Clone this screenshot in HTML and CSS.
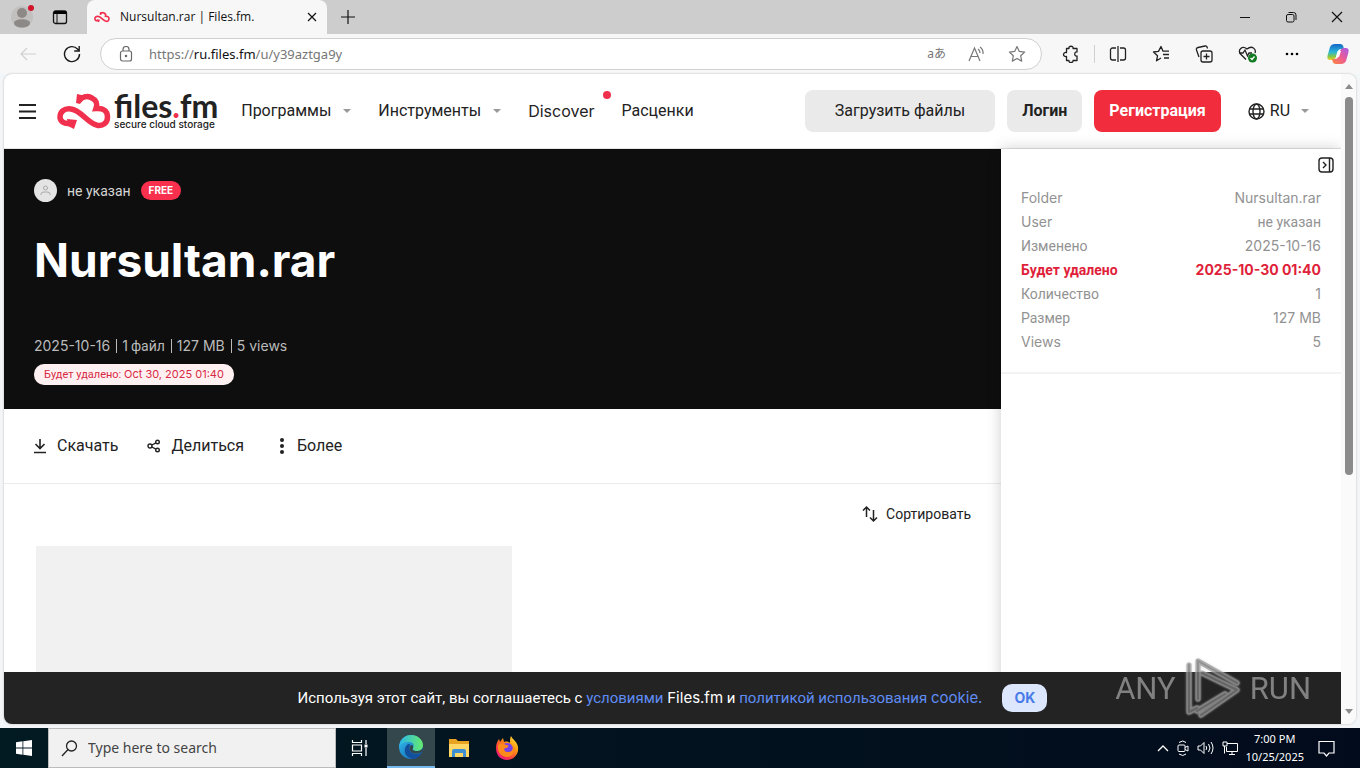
FILE: index.html
```html
<!DOCTYPE html>
<html lang="ru">
<head>
<meta charset="utf-8">
<title>Nursultan.rar | Files.fm.</title>
<link rel="stylesheet" href="styles.css">
</head>
<body>
<svg class="defs" aria-hidden="true">
  <defs>
    <symbol id="cloud" viewBox="0 0 54 36">
      <path d="M22 7.500C25 4 30 2.500 34 4.500C39 7 41 10 39 15.500C47 15 50.500 18 50.500 24C50.500 30 46 33 41 32.500C31 31 24 17 14 16C7 15 3 19 3 24C3 28 7 31 12 30.500" fill="none" stroke="#f0304c" stroke-width="5.500"/>
      <path d="M20 1l9 2-6 8-4-1zM10 26l10 1-3 9-6-3z" fill="#f0304c"/>
    </symbol>
    <linearGradient id="edgeBlue" x1="0" y1="0" x2="1" y2="1"><stop offset="0" stop-color="#35c1f1"/><stop offset="1" stop-color="#0c59a4"/></linearGradient>
    <linearGradient id="edgeGreen" x1="0" y1="0" x2="1" y2="0"><stop offset="0" stop-color="#2bb5e8"/><stop offset="1" stop-color="#66eb6e"/></linearGradient>
    <linearGradient id="fire" x1="1" y1="0" x2="0.2" y2="1"><stop offset="0" stop-color="#fff44f"/><stop offset="0.4" stop-color="#ff980e"/><stop offset="0.75" stop-color="#ff3647"/><stop offset="1" stop-color="#e31587"/></linearGradient>
    <linearGradient id="copA" x1="0" y1="0" x2="0" y2="1"><stop offset="0" stop-color="#1565c8"/><stop offset="0.5" stop-color="#29b6d8"/><stop offset="0.8" stop-color="#8bc83f"/><stop offset="1" stop-color="#f4cf2e"/></linearGradient>
    <linearGradient id="copB" x1="1" y1="0" x2="0" y2="1"><stop offset="0" stop-color="#a45bea"/><stop offset="0.5" stop-color="#ee5b93"/><stop offset="1" stop-color="#fa8a3c"/></linearGradient>
  </defs>
</svg>

<header class="titlebar">
  <button class="profile" aria-label="Profile"><svg width="24" height="24" viewBox="0 0 24 24"><circle cx="12" cy="12" r="11" fill="#c2c0bf"/><g fill="#8d8987"><circle cx="12" cy="8" r="5"/><path d="M4 18c0-5 16-5 16 0 0 6-16 6-16 0z"/></g><circle cx="21" cy="3" r="3" fill="#d3122c"/></svg></button>
  <button class="tabs-menu" aria-label="Tab actions"><svg width="16" height="16" viewBox="0 0 16 16"><rect x="1.500" y="2" width="13" height="12.500" rx="2" fill="none" stroke="#111" stroke-width="1.300"/><path d="M2 2h12v3H2z"/><path d="M5 4v10" stroke="#111"/></svg></button>
  <div class="tab">
    <svg width="16" height="12"><use href="#cloud"/></svg>
    <span class="tab-title">Nursultan.rar | Files.fm.</span>
    <button aria-label="Close tab"><svg width="10" height="10" viewBox="0 0 10 10" stroke="#111" stroke-width="1.200"><path d="M1 1l8 8M9 1l-8 8"/></svg></button>
  </div>
  <button class="new-tab" aria-label="New tab"><svg width="14" height="14" viewBox="0 0 14 14" stroke="#111" stroke-width="1.200"><path d="M7 0v14M0 7h14"/></svg></button>
  <div class="window-buttons">
    <button aria-label="Minimize"><svg width="12" height="12" viewBox="0 0 12 12"><path d="M1 6.500h10" stroke="#111"/></svg></button>
    <button aria-label="Restore"><svg width="12" height="12" viewBox="0 0 12 12" fill="none" stroke="#111"><rect x="1.500" y="3.500" width="7.500" height="7.500" rx="1.500"/><path d="M3.500 1.500h5a2.500 2.500 0 0 1 2.500 2.500v5"/></svg></button>
    <button aria-label="Close"><svg width="12" height="12" viewBox="0 0 12 12" stroke="#111" stroke-width="1.200"><path d="M1 1l10 10M11 1L1 11"/></svg></button>
  </div>
</header>

<div class="toolbar">
  <button class="back" aria-label="Back"><svg width="18" height="14" viewBox="0 0 18 14" fill="none" stroke="#cfcfcf" stroke-width="1.200"><path d="M17 7H2M8 1L2 7l6 6"/></svg></button>
  <button class="reload" aria-label="Refresh"><svg width="18" height="18" viewBox="0 0 18 18" fill="none" stroke="#1b1b1b" stroke-width="1.400"><path d="M16.500 9A7.500 7.500 0 1 1 14.500 4L16 5.500M16.200 1v5h-5"/></svg></button>
  <div class="address">
    <svg width="14" height="16" viewBox="0 0 14 16" fill="none" stroke="#6a6a6a" stroke-width="1.200"><rect x="1.500" y="5" width="11" height="10" rx="2"/><path d="M4 5V3.500a3 3 0 0 1 6 0V5"/><circle cx="7" cy="10" r=".7" fill="#555"/></svg>
    <span class="url">https://<b>ru.files.fm</b>/u/y39aztga9y</span>
    <button class="translate" aria-label="Translate">aあ</button>
    <button aria-label="Read aloud"><svg width="18" height="16" viewBox="0 0 18 16" fill="none" stroke="#777" stroke-width="1.200"><path d="M1 15L6.500 2 12 15M3 10.500h7M10 3q2 1.500 2 4M12 1q3.500 2.500 3 7"/></svg></button>
    <button aria-label="Add to favorites"><svg width="18" height="18" viewBox="0 0 18 18" fill="none" stroke="#777" stroke-width="1.200" stroke-linejoin="round"><path d="M9 1.500l2.300 4.900 5.300.7-3.900 3.700 1 5.300L9 13.500l-4.700 2.600 1-5.300L1.400 7.100l5.300-.7z"/></svg></button>
  </div>
  <div class="extensions">
    <button aria-label="Extensions"><svg width="18" height="18" viewBox="0 0 18 18" fill="none" stroke="#222" stroke-width="1.300" stroke-linejoin="round"><path d="M4.500 3.500h2.500c-.8-3 4.800-3 4 0h4V7c-3-.8-3 4.800 0 4v4.500h-4c.8 2.500-4.800 2.500-4 0H4.500v-4c-4 .8-4-4.800 0-4z"/></svg></button>
    <i class="divider"></i>
    <button aria-label="Split screen"><svg width="18" height="18" viewBox="0 0 18 18" fill="none" stroke="#222" stroke-width="1.300"><path d="M7 3H3.500A2 2 0 0 0 1.500 5v8a2 2 0 0 0 2 2H7M11 3h3.500a2 2 0 0 1 2 2v8a2 2 0 0 1-2 2H11M9 1v16"/></svg></button>
    <button aria-label="Favorites"><svg width="18" height="18" viewBox="0 0 18 18" fill="none" stroke="#222" stroke-width="1.300" stroke-linejoin="round"><path d="M9 13l-4.500 2.800 1-5L1.500 7l5-.6L9 1.500l2 4.700h6M11 9.500h6M12 13h5"/></svg></button>
    <button aria-label="Collections"><svg width="18" height="18" viewBox="0 0 18 18" fill="none" stroke="#222" stroke-width="1.300"><rect x="6" y="6" width="11" height="11" rx="2"/><path d="M11.500 8.500v6M8.500 11.500h6M4 12L1.500 5Q1 3 3 2.500L10 1q2-.3 2.500 2.500"/></svg></button>
    <button aria-label="Browser essentials"><svg width="20" height="18" viewBox="0 0 20 18" fill="none" stroke="#222" stroke-width="1.300"><path d="M8 14.500L2.500 9C-.5 5 4 0 9 4c5-4 9.500 0 8 4M1 8h4l2-3 2.500 6L11 8h3"/><circle cx="14.500" cy="13" r="4.500" fill="#117a22" stroke="none"/><path d="M12.500 13l1.500 1.500 2.500-3" stroke="#fff"/></svg></button>
    <button aria-label="Settings"><svg width="18" height="18" viewBox="0 0 18 18"><circle cx="4" cy="9" r="1.300"/><circle cx="9" cy="9" r="1.300"/><circle cx="14" cy="9" r="1.300"/></svg></button>
    <button aria-label="Copilot"><svg width="24" height="24" viewBox="0 0 24 24"><path d="M9 2h5c2 0 3 1 3.500 3l.5 2h-3c-2 0-3 1-4 4l-1 4c-.8 2-2 3-4 3H4c-3 0-3-3-2-6l2-7C5 3 6.500 2 9 2z" fill="url(#copA)"/><path d="M15 22h-5c-2 0-3-1-3.500-3L6 17h3c2 0 3-1 4-4l1-4c.8-2 2-3 4-3h2c3 0 3 3 2 6l-2 7c-1 2-2.500 3-5 3z" fill="url(#copB)"/><path d="M12 9h3l-2 6h-3z" fill="#fff"/></svg></button>
  </div>
</div>

<div class="viewport">
  <div class="page">
    <header class="site-header">
      <button class="burger" aria-label="Меню"><svg width="17" height="16" viewBox="0 0 17 16" stroke="#222" stroke-width="2"><path d="M0 2h17M0 8.500h17M0 15h17"/></svg></button>
      <a class="logo" href="#">
        <svg width="54" height="36"><use href="#cloud"/></svg>
        <span class="logo-words"><span class="logo-name">files<em>.</em>fm</span><span class="logo-sub">secure cloud storage</span></span>
      </a>
      <nav class="site-nav">
        <a class="has-menu" href="#">Программы</a>
        <a class="has-menu" href="#">Инструменты</a>
        <a class="latin has-badge" href="#">Discover</a>
        <a href="#">Расценки</a>
      </nav>
      <div class="account">
        <button class="btn upload">Загрузить файлы</button>
        <button class="btn login">Логин</button>
        <button class="btn register">Регистрация</button>
        <button class="language has-menu"><svg width="17" height="17" viewBox="0 0 17 17" fill="none" stroke="#222" stroke-width="1.400"><circle cx="8.500" cy="8.500" r="7.500"/><ellipse cx="8.500" cy="8.500" rx="3.500" ry="7.500"/><path d="M1.500 6h14M1.500 11h14"/></svg><span>RU</span></button>
      </div>
    </header>
    <div class="columns">
      <main class="content">
        <section class="hero">
          <div class="owner">
            <span class="avatar"><svg width="11" height="11" viewBox="0 0 11 11" fill="none" stroke="#aaa"><circle cx="5.500" cy="3" r="2"/><path d="M1 10V9q0-2 3-2h3q3 0 3 2v1"/></svg></span>
            <span>не указан</span><span class="free">FREE</span>
          </div>
          <h1>Nursultan.rar</h1>
          <ul class="meta"><li class="latin">2025-10-16</li><li><span class="latin">1</span> файл</li><li class="latin">127 MB</li><li class="latin">5 views</li></ul>
          <span class="expires">Будет удалено: <span class="latin">Oct 30, 2025 01:40</span></span>
        </section>
        <div class="actions">
          <button><svg width="14" height="16" viewBox="0 0 14 16" fill="none" stroke="#222" stroke-width="1.600"><path d="M7 1v9M2.500 6L7 10.500 11.500 6M1 14.500h12"/></svg>Скачать</button>
          <button><svg width="14" height="14" viewBox="0 0 14 14" fill="none" stroke="#222" stroke-width="1.400"><circle cx="3" cy="7" r="2"/><circle cx="10.500" cy="3" r="1.800"/><circle cx="10.500" cy="11" r="1.800"/><path d="M4.800 6L9 3.800M4.800 8L9 10.200"/></svg>Делиться</button>
          <button class="more"><svg width="4" height="16" viewBox="0 0 4 16" fill="#222"><circle cx="2" cy="2" r="2"/><circle cx="2" cy="8" r="2"/><circle cx="2" cy="14" r="2"/></svg>Более</button>
        </div>
        <div class="sorting"><button><svg width="16" height="18" viewBox="0 0 16 18" fill="none" stroke="#222" stroke-width="1.500"><path d="M4.500 12V2M1 5.500L4.500 2 8 5.500M11.500 5v11M8 12.500l3.500 3.500 3.500-3.500"/></svg>Сортировать</button></div>
        <div class="files"><div class="file-card"></div></div>
      </main>
      <aside class="details">
        <button class="collapse" aria-label="Скрыть панель"><svg width="16" height="16" viewBox="0 0 16 16" fill="none" stroke="#222" stroke-width="1.400"><rect x="1" y="1" width="14" height="14" rx="3"/><path d="M11.500 1v14M5 5l3 3-3 3"/></svg></button>
        <dl>
          <div><dt class="latin">Folder</dt><dd class="latin">Nursultan.rar</dd></div>
          <div><dt class="latin">User</dt><dd>не указан</dd></div>
          <div><dt>Изменено</dt><dd class="latin">2025-10-16</dd></div>
          <div class="warn"><dt>Будет удалено</dt><dd class="latin">2025-10-30 01:40</dd></div>
          <div><dt>Количество</dt><dd class="latin">1</dd></div>
          <div><dt>Размер</dt><dd class="latin">127 MB</dd></div>
          <div><dt class="latin">Views</dt><dd class="latin">5</dd></div>
        </dl>
      </aside>
    </div>
    <div class="cookies">
      <p>Используя этот сайт, вы соглашаетесь с <a href="#">условиями</a> <span class="latin">Files.fm</span> и <a href="#">политикой использования <span class="latin">cookie.</span></a></p>
      <button>OK</button>
    </div>
  </div>
  <div class="scrollbar"><i class="arrow up"></i><i class="thumb"></i><i class="arrow down"></i></div>
  <div class="watermark"><span>ANY</span>
    <svg width="60" height="66" viewBox="0 0 60 66" fill="none" stroke-linejoin="round" stroke-linecap="round">
      <g stroke="#999" stroke-width="5"><path d="M14 55L42 38M6 9v47l8-4M15 43V5l39 22M19 17l35 17L18 59"/></g>
      <g stroke="#777" stroke-width="2"><path d="M14 55L42 38M6 9v47l8-4M15 43V5l39 22M19 17l35 17L18 59"/></g>
    </svg>
    <span>RUN</span></div>
</div>

<footer class="taskbar">
  <button class="start" aria-label="Start"><svg width="16" height="16" viewBox="0 0 16 16" fill="#fff"><path d="M0 2.200L6.500 1.300V7.600H0zM7.300 1.200L16 0v7.600H7.300zM0 8.400h6.500v6.300L0 13.800zM7.300 8.400H16V16l-8.700-1.200z"/></svg></button>
  <label class="search"><svg width="17" height="17" viewBox="0 0 17 17" fill="none" stroke="#222" stroke-width="1.300"><circle cx="10.500" cy="6" r="5"/><path d="M7 9.500L1 16"/></svg><input type="text" placeholder="Type here to search" aria-label="Search"></label>
  <button class="app" aria-label="Task view"><svg width="18" height="18" viewBox="0 0 18 18" fill="none" stroke="#fff" stroke-width="1.200"><path d="M1.500 1v2.500h9V1M1.500 17v-2.500h9V17M1.500 6h9v6h-9zM15 1v4M15 9v8"/><path d="M13.500 5.500h3v3h-3z" fill="#fff" stroke="none"/></svg></button>
  <button class="app current" aria-label="Microsoft Edge"><svg width="26" height="26" viewBox="0 0 26 26"><circle cx="13" cy="13" r="12" fill="url(#edgeBlue)"/><path d="M1.500 11C3 4 8 1 13 1c7 0 12 5 12 10 0 4-3 6-6 6-3 0-5-1-4-3 2-4-1-6-4-6-5 0-9 2-9.500 5z" fill="url(#edgeGreen)"/><path d="M10 10c-3 2-5 8-1 12 2 2 5 3 7 3 4-1 6-3 7.500-6-6 3-13 0-12-6 .2-1.500 1-2 1-2s-1-1.500-2.500-1z" fill="#124f9c"/><path d="M13 11c-2 2-2 5 0 7 3 2 7 2 10.500 0 .5 0 .5 1 0 2l1.500-6c-2 3-5 3-7 3-3 0-4-1-3-3 .6-1.500.2-3-2-3z" fill="#34474d"/></svg></button>
  <button class="app" aria-label="File Explorer"><svg width="22" height="20" viewBox="0 0 22 20"><path d="M1 1h7l2 2h11v16H1z" fill="#e9a323"/><path d="M1 6h20v13H1z" fill="#ffd766"/><path d="M4 19v-6q0-2 2-2h10q2 0 2 2v6h-3v-4H7v4z" fill="#3d8fd1"/></svg></button>
  <button class="app" aria-label="Firefox"><svg width="24" height="26" viewBox="0 0 24 26"><path d="M16 1c1 3 6 5 7 11 1 7-4 13-11 13S1 20 1 13c0-4 1-6 3-9l1 3 3-4 1 4c3-1 5 0 6 1 0-3 0-5 1-7z" fill="url(#fire)"/><circle cx="12" cy="14" r="6" fill="#7542e5"/><path d="M3 10c3-3 6-1 8 0 3 0 3 2 0 3-3 0-2 4 2 4 3 0 5-2 5-5 3 5-1 10-6 10-6 0-10-5-9-12z" fill="#ff8a1c"/></svg></button>
  <div class="tray">
    <svg width="12" height="8" viewBox="0 0 12 8" fill="none" stroke="#fff" stroke-width="1.300"><path d="M1 7l5-5 5 5"/></svg>
    <svg width="12" height="16" viewBox="0 0 12 16" fill="none" stroke="#fff"><rect x="1" y="5" width="7" height="6.500" rx="1"/><path d="M8 7.500L11 6v5L8 9.500M2 2.500q4-3 7 0M2 14q4 3 7 0"/></svg>
    <svg width="17" height="14" viewBox="0 0 17 14" fill="none" stroke="#fff"><path d="M1 5h2.500L7 1.500v11L3.500 9H1zM9 5q1.500 2 0 4M11.500 3q3 4 0 8M14 1q4 6 0 12"/></svg>
    <svg width="16" height="14" viewBox="0 0 16 14" fill="none" stroke="#fff"><path d="M5 2.500h10.500v8H4.500V6M1 1h4v4H1zM2.500 5v7.500M7 13.500h6M10 10.500v3"/></svg>
    <time>7:00 PM<br>10/25/2025</time>
    <svg class="notice" width="17" height="17" viewBox="0 0 17 17" fill="none" stroke="#fff" stroke-width="1.200"><path d="M1 1.500h15v11.500h-5L8.500 16 6 13H1z"/></svg>
  </div>
</footer>
</body>
</html>
```
FILE: styles.css
```css
* { box-sizing: border-box; }
body {
  margin: 0;
  height: 100vh;
  display: flex;
  flex-direction: column;
  overflow: hidden;
  background: #f3f6f8;
  color: #222;
  font: 16px/24px Roboto, sans-serif;
}
button {
  display: flex;
  align-items: center;
  justify-content: center;
  padding: 0;
  border: 0;
  background: none;
  color: inherit;
  font: inherit;
  cursor: pointer;
}
a { color: inherit; text-decoration: none; }
svg { display: block; flex: none; }
.defs { position: absolute; width: 0; height: 0; }
.latin { font-family: Inter, sans-serif; }

/* Browser frame */
.titlebar { display: flex; align-items: center; height: 34px; flex: none; background: #cdcdcd; }
.profile { margin-left: 10px; width: 24px; }
.tabs-menu { margin: 0 19px 0 18px; }
.tab {
  display: flex;
  align-items: center;
  align-self: stretch;
  flex: 0 1 240px;
  padding: 0 10px 0 7px;
  gap: 10px;
  border-radius: 8px 8px 0 0;
  background: #f7f7f7;
  font: 12px/16px "Open Sans", sans-serif;
  color: #111;
}
.tab-title { flex: 1; white-space: nowrap; }
.new-tab { margin-left: 14px; }
.window-buttons { display: flex; margin-left: auto; }
.window-buttons button { width: 46px; height: 34px; }

.toolbar { display: flex; align-items: center; height: 40px; flex: none; background: #f7f7f7; }
.back { margin: 0 26px 0 19px; }
.address {
  display: flex;
  align-items: center;
  flex: 1;
  height: 32px;
  margin-left: 19px;
  padding: 0 15px 0 18px;
  gap: 22px;
  border: 1px solid #d0d0d0;
  border-radius: 16px;
  background: #fff;
}
.url { flex: 1; margin-left: -6px; color: #767676; font: 13px/20px "Noto Sans", sans-serif; }
.url b { color: #111; font-weight: 400; }
.translate { color: #777; font: 12px/20px "Noto Sans", "Noto Sans CJK JP", sans-serif; }
.extensions { display: flex; align-items: center; gap: 25px; margin: 0 10px 0 20px; }
.divider { width: 1px; height: 18px; margin: 0 -11px; background: #d0d0d0; }

/* Page area */
.viewport {
  position: relative;
  display: flex;
  flex: 1;
  min-height: 0;
  margin: 0 4px 4px;
  border-radius: 8px;
  overflow: hidden;
  background: #fff;
  box-shadow: 0 0 2px #aaa;
}
.page { position: relative; display: flex; flex-direction: column; flex: 1; min-width: 0; overflow: hidden; }
.site-header { display: flex; align-items: center; flex: none; height: 75px; padding: 0 32px 0 15px; border-bottom: 1px solid #e3e3e3; }
.logo { display: flex; align-items: center; gap: 3px; margin-left: 21px; }
.logo-words { display: flex; flex-direction: column; }
.logo-name { font: 700 32px/25px Lato, sans-serif; }
.logo-name em { color: #f0304c; font-style: normal; }
.logo-sub { font: 500 10px/12px Inter, sans-serif; }
.site-nav { display: flex; gap: 27px; margin-left: 23px; white-space: nowrap; }
.has-menu { display: flex; align-items: center; }
.has-menu::after {
  content: "";
  margin-left: 12px;
  border: 4px solid transparent;
  border-top-color: #999;
  border-bottom: 0;
}
.has-badge { position: relative; }
.has-badge::after {
  content: "";
  position: absolute;
  top: -8px;
  right: -16px;
  width: 8px;
  height: 8px;
  border-radius: 50%;
  background: #f0304c;
}
.account { display: flex; gap: 12px; margin-left: auto; white-space: nowrap; }
.btn { height: 42px; border-radius: 8px; background: #eaeaea; }
.upload { padding: 0 30px; }
.login { padding: 0 15px; font-weight: 700; }
.register { padding: 0 15px; background: #f12c3c; color: #fff; font-weight: 700; }
.language { gap: 5px; margin-left: 15px; }
.language::after { margin-left: 6px; }

.columns { display: flex; flex: 1; min-height: 0; }
.content { flex: 1; min-width: 0; }
.hero { display: flex; flex-direction: column; align-items: flex-start; height: 260px; padding: 30px; background: #0e0e0e; color: #fff; }
.owner { display: flex; align-items: center; height: 23px; gap: 10px; color: #d5d5d5; font-size: 14px; }
.avatar { display: flex; align-items: center; justify-content: center; width: 23px; height: 23px; border-radius: 50%; background: #e4e4e4; }
.free { padding: 0 8px; border-radius: 10px; background: #f8304e; color: #fff; font: 700 10px/19px Inter, sans-serif; }
.hero h1 { margin: 28px 0 0; font: 700 46px/60px Inter, sans-serif; }
.meta { display: flex; margin: 46px 0 0; padding: 0; color: #bbb; font-size: 14px; line-height: 20px; list-style: none; }
.meta li { display: flex; align-items: center; gap: 3px; }
.meta li + li::before { content: ""; width: 1px; height: 14px; margin: 0 2px 0 6px; background: #bbb; }
.expires { margin-top: 8px; padding: 0 10px; border-radius: 10px; background: #fff1f2; color: #d82a43; font-size: 11px; line-height: 20px; }
.actions { display: flex; align-items: center; gap: 29px; height: 75px; padding: 0 29px; border-bottom: 1px solid #ebebeb; }
.actions button { gap: 10px; }
.actions .more { gap: 13px; margin-left: 7px; }
.sorting { display: flex; justify-content: flex-end; padding: 18px 30px; font-size: 14px; }
.sorting button { gap: 8px; }
.files { display: grid; grid-template-columns: repeat(2, 1fr); gap: 0; padding: 2px 13px 0 32px; }
.file-card { height: 280px; background: #f1f1f1; }

.details { width: 340px; box-shadow: 0 0 14px #0003; background: #fff; }
.collapse { margin: 8px 7px 0 auto; }
.details dl { margin: 0; padding: 13px 20px 18px; border-bottom: 2px solid #f3f3f3; color: #929292; font-size: 14px; line-height: 24px; }
.details dl div { display: flex; justify-content: space-between; }
.details dd { margin: 0; }
.details .warn { color: #e01f3a; font-weight: 700; }

.cookies {
  position: absolute;
  inset: auto 0 0;
  display: flex;
  align-items: center;
  justify-content: center;
  gap: 20px;
  padding: 12px 0;
  background: #232323;
  color: #fff;
  font-size: 15px;
}
.cookies p { margin: 0; line-height: 28px; white-space: nowrap; }
.cookies a { color: #5f8df5; }
.cookies button { width: 45px; height: 28px; border-radius: 10px; background: #dce6fc; color: #477be8; font: 700 14px/20px Inter, sans-serif; }

.scrollbar { display: flex; flex-direction: column; align-items: center; flex: none; width: 15px; padding: 10px 0; background: #fafafa; }
.arrow { border: 4px solid transparent; }
.up { border-bottom: 5px solid #8b8b8b; border-top: 0; }
.down { border-top: 5px solid #8b8b8b; border-bottom: 0; margin-top: auto; }
.thumb { width: 8px; height: 60%; margin-top: 8px; border-radius: 4px; background: #8b8b8b; }

.watermark {
  position: absolute;
  right: 45px;
  bottom: 2px;
  display: flex;
  align-items: center;
  gap: 7px;
  color: #999;
  opacity: .8;
  pointer-events: none;
  font: 31px/48px Roboto, sans-serif;
}
.watermark svg { filter: drop-shadow(0 0 1px #ccc); }

/* Desktop taskbar */
.taskbar { display: flex; flex: none; height: 40px; background: linear-gradient(90deg, #021a22, #020b1c); color: #fff; }
.start { width: 48px; }
.search { display: flex; align-items: center; width: 288px; padding: 0 12px; gap: 10px; border: 1px solid #bbb; background: #f1f1f1; }
.search input { flex: 1; min-width: 0; padding: 0; border: 0; background: none; font: 14px/20px "Noto Sans", sans-serif; }
.search input::placeholder { color: #444; opacity: 1; }
.app { width: 48px; }
.current { margin-left: 3px; border-bottom: 2px solid #76b9ed; background: #34474d; }
.tray { display: flex; align-items: center; gap: 8px; margin-left: auto; padding-right: 25px; }
.tray time { margin-left: -1px; font: 11px/18px "Noto Sans", sans-serif; text-align: center; }
.notice { margin-left: 6px; }
```
